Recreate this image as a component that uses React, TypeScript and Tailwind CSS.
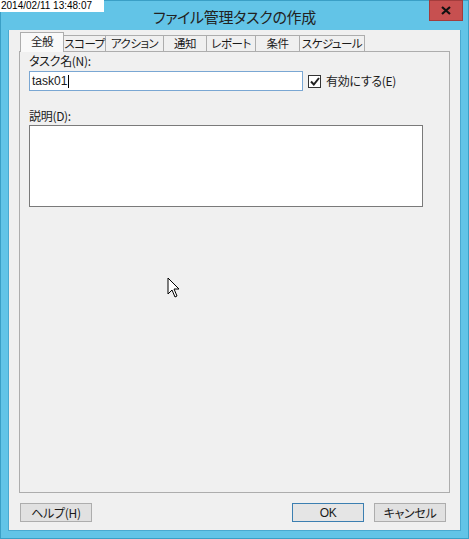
const jp = "font-['Noto_Sans_CJK_JP','Noto_Sans',sans-serif] [font-feature-settings:'palt']";

const tabs = [
  { label: "全般", w: "w-[44px]" },
  { label: "スコープ", w: "w-[42px]" },
  { label: "アクション", w: "w-[58px]" },
  { label: "通知", w: "w-[43px]" },
  { label: "レポート", w: "w-[49px]" },
  { label: "条件", w: "w-[44px]" },
  { label: "スケジュール", w: "w-[65px]" },
];

function Cursor() {
  return (
    <svg className="absolute left-[166px] top-[276px]" width="14" height="22" viewBox="0 0 14 22">
      <path d="M1 1 L1 17 L5 13 L8 20 L10 19 L7 12 L12 12 Z" fill="#fff" stroke="#000" strokeWidth="1" strokeLinejoin="miter" />
    </svg>
  );
}

export default function App() {
  return (
    <div className={`relative w-[469px] h-[539px] bg-[#62c4e7] border border-[#3a9fc6] ${jp} text-[12px] text-[#1a1a1a]`}>
      {/* title bar */}
      <div className="relative h-[29px] flex items-center justify-center">
        <span className="text-[15px] text-[#222] mt-[4px] tracking-[-0.3px]">ファイル管理タスクの作成</span>
        <div className="absolute right-[5px] top-[-1px] w-[34px] h-[21px] bg-[#c75050] border border-[#a33c3c] flex items-center justify-center">
          <svg width="10" height="9" viewBox="0 0 10 9">
            <path d="M1 1 L9 8 M9 1 L1 8" stroke="#111" strokeWidth="2.2" />
          </svg>
        </div>
        <div className="absolute left-[-1px] top-[-1px] h-[12px] w-[104px] bg-white flex items-center font-['Liberation_Sans',sans-serif] text-[10px] leading-none text-black pl-[1px] [font-feature-settings:normal]">
          2014/02/11 13:48:07
        </div>
      </div>

      {/* client area */}
      <div className="ml-[7px] w-[453px] h-[501px] bg-[#f0f0f0] border border-[#4aa9d0] border-t-0 pt-[2px]">
        <div className="ml-[10px] flex items-end h-[19px] whitespace-nowrap text-[11.5px] tracking-[-0.5px]">
          {tabs.map((t, i) =>
            i === 0 ? (
              <div
                key={t.label}
                className={`${t.w} h-[20px] -mb-px relative z-10 bg-[#f9f9f9] border border-b-0 border-[#adadad] flex items-center justify-center ml-[1px] pb-[1px]`}
              >
                {t.label}
              </div>
            ) : (
              <div
                key={t.label}
                className={`${t.w} h-[16px] bg-[#f0f0f0] border border-l-0 border-b-0 border-[#adadad] flex items-center justify-center overflow-visible`}
              >
                {t.label}
              </div>
            ),
          )}
        </div>

        <div className="ml-[10px] w-[431px] h-[442px] bg-[#f0f0f0] border border-[#adadad] relative">
          <div className="pl-[9px] pt-[1px] flex flex-col">
            <div className="h-[16px] leading-[16px] tracking-[-0.3px]">タスク名(N):</div>
            <div className="flex items-center mt-[2px]">
              <div className="w-[274px] h-[20px] bg-white border border-[#7aa7d3] flex items-center pl-[2px] font-['Liberation_Sans',sans-serif] text-[12px]">
                task01<span className="w-px h-[13px] bg-black ml-[1px]" />
              </div>
              <div className="ml-[5px] w-[13px] h-[13px] bg-white border border-[#333] flex items-center justify-center">
                <svg width="10" height="9" viewBox="0 0 10 9">
                  <path d="M1 4.5 L3.8 7.5 L9 1" stroke="#222" strokeWidth="2" fill="none" />
                </svg>
              </div>
              <span className="ml-[5px] tracking-[-0.3px]">有効にする(E)</span>
            </div>
            <div className="h-[16px] leading-[16px] mt-[17px] tracking-[-0.3px]">説明(D):</div>
            <div className="w-[394px] h-[82px] bg-white border border-[#7a7a7a] mt-[1px]" />
          </div>
        </div>

        <div className="flex items-center mt-[10px] ml-[11px] tracking-[-0.3px]">
          <div className="w-[72px] h-[19px] bg-[#e1e1e1] border border-[#adadad] flex items-center justify-center">ヘルプ(H)</div>
          <div className="ml-[200px] w-[72px] h-[19px] bg-[#e5e5e5] border border-[#3c7fb1] flex items-center justify-center font-['Liberation_Sans',sans-serif]">OK</div>
          <div className="ml-[10px] w-[72px] h-[19px] bg-[#e1e1e1] border border-[#adadad] flex items-center justify-center">キャンセル</div>
        </div>
      </div>
      <Cursor />
    </div>
  );
}
